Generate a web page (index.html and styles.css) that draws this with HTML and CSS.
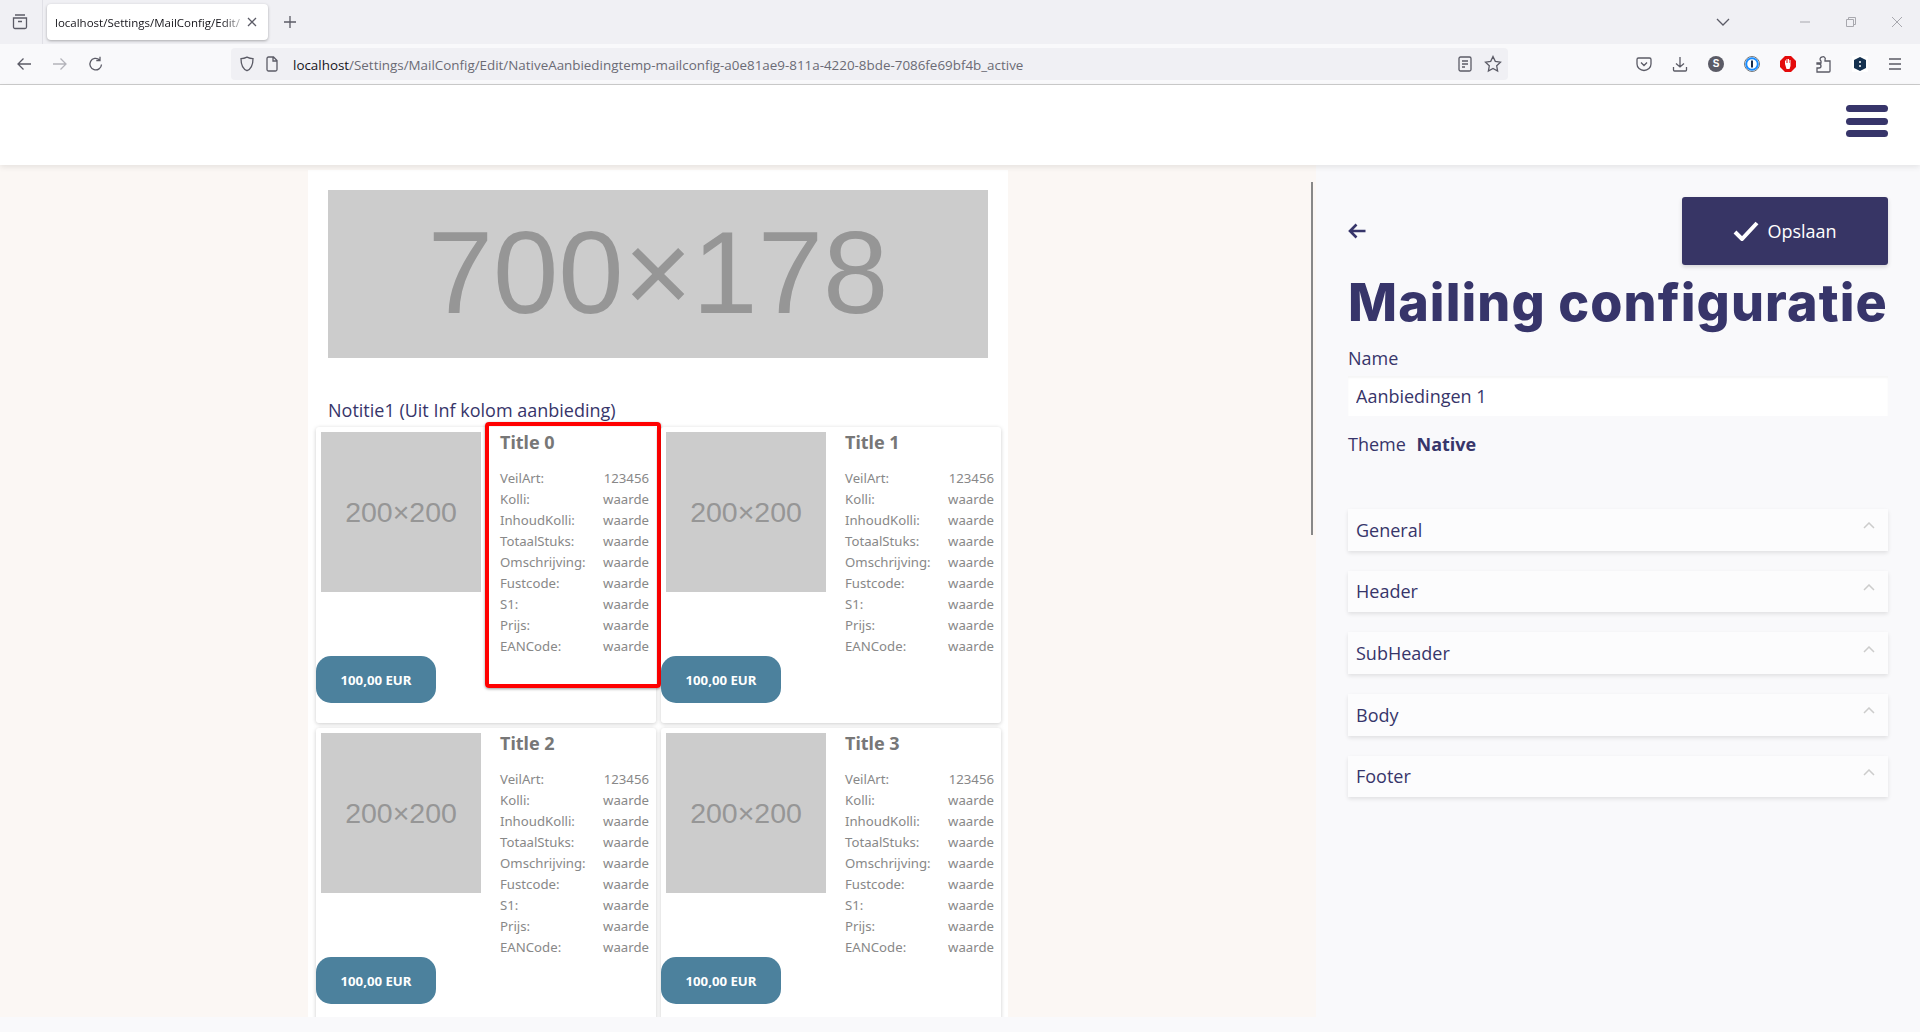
FILE: index.html
```html
<!DOCTYPE html>
<html lang="nl">
<head>
<meta charset="utf-8">
<title>Mailing configuratie</title>
<link rel="stylesheet" href="styles.css">
</head>
<body>
<div class="tabbar">
  <div class="tabbar-left">
    <svg class="ico" width="16" height="16" viewBox="0 0 16 16"><path d="M3 1.500h10M1.500 4.500h13v9a1.500 1.500 0 0 1-1.500 1.500H3a1.500 1.500 0 0 1-1.500-1.500zM6 8h4" transform="translate(0 -.5)"/></svg>
  </div>
  <div class="tab">
    <span class="tab-title">localhost/Settings/MailConfig/Edit/</span>
    <svg class="ico" width="10" height="10" viewBox="0 0 10 10"><path d="M1 1l8 8M9 1l-8 8"/></svg>
  </div>
  <svg class="ico newtab" width="14" height="14" viewBox="0 0 14 14"><path d="M7 1v12M1 7h12"/></svg>
  <div class="tabbar-right">
    <svg class="ico dropdown" width="14" height="10" viewBox="0 0 14 10"><path d="M1 2l6 6 6-6"/></svg>
    <svg class="win" width="10" height="10" viewBox="0 0 10 10"><path d="M0 5h10"/></svg>
    <svg class="win" width="10" height="10" viewBox="0 0 10 10"><path d="M.5 2.500h7v7h-7zM2.500 2.500v-2h7v7h-2"/></svg>
    <svg class="win" width="10" height="10" viewBox="0 0 10 10"><path d="M0 0l10 10M10 0L0 10"/></svg>
  </div>
</div>
<div class="toolbar">
  <div class="nav">
    <svg class="ico" width="16" height="16" viewBox="0 0 16 16"><path d="M15 8H2M7.500 2.500L2 8l5.500 5.500"/></svg>
    <svg class="ico dim" width="16" height="16" viewBox="0 0 16 16"><path d="M1 8h13M8.500 2.500L14 8l-5.500 5.500"/></svg>
    <svg class="ico" width="16" height="16" viewBox="0 0 16 16"><path d="M13.500 8.500a5.800 5.800 0 1 1-2-4.800M12 .8v3.700H8.300"/></svg>
  </div>
  <div class="urlbar">
    <svg class="ico" width="16" height="16" viewBox="0 0 16 16"><path d="M8 1.200c2 1 4 1.500 6 1.500 0 6-2 10.300-6 12-4-1.700-6-6-6-12 2 0 4-.5 6-1.500z"/></svg>
    <svg class="ico" width="14" height="16" viewBox="0 0 14 16"><path d="M2 2.500A1.500 1.500 0 0 1 3.500 1h5L12 4.500v9a1.500 1.500 0 0 1-1.500 1.500h-7A1.500 1.500 0 0 1 2 13.500zM8 1v4h4"/></svg>
    <span class="url"><b>localhost</b>/Settings/MailConfig/Edit/NativeAanbiedingtemp-mailconfig-a0e81ae9-811a-4220-8bde-7086fe69bf4b_active</span>
    <svg class="ico reader" width="14" height="16" viewBox="0 0 14 16"><path d="M2.500 1h9A1.500 1.500 0 0 1 13 2.500v11a1.500 1.500 0 0 1-1.500 1.500h-9A1.500 1.500 0 0 1 1 13.500v-11A1.500 1.500 0 0 1 2.500 1zM4 5h6M4 8h6M4 11h3"/></svg>
    <svg class="ico" width="18" height="18" viewBox="0 0 18 18"><path d="M9 1.500l2.300 4.900 5.200.7-3.800 3.700.9 5.300L9 13.500l-4.600 2.600.9-5.300L1.500 7.100l5.200-.7z"/></svg>
  </div>
  <div class="addons">
    <svg class="ico" width="16" height="16" viewBox="0 0 16 16"><path d="M2.500 2h11A1.500 1.500 0 0 1 15 3.500V8a7 6.500 0 0 1-14 0V3.500A1.500 1.500 0 0 1 2.500 2zM5 6.500l3 3 3-3"/></svg>
    <svg class="ico" width="16" height="16" viewBox="0 0 16 16"><path d="M8 1v10M4 7.500L8 11l4-3.500M1.500 11v3a1 1 0 0 0 1 1h11a1 1 0 0 0 1-1v-3"/></svg>
    <span class="addon-s">S</span>
    <svg width="16" height="16" viewBox="0 0 16 16"><circle cx="8" cy="8" r="7.500" fill="#fff" stroke="#777"/><circle cx="8" cy="8" r="5.800" fill="none" stroke="#1a8cff" stroke-width="2"/><rect x="7" y="4.500" width="2" height="7" fill="#1a2b4a"/></svg>
    <svg width="16" height="16" viewBox="0 0 16 16"><path d="M5 0h6l5 5v6l-5 5H5l-5-5V5z" fill="#e40b0b"/><path d="M5 8V4.500h1V7h.5V3h1v4H8V3h1v4h.5V4h1v6l-1 3H6.500z" fill="#fff"/></svg>
    <svg class="ico" width="16" height="18" viewBox="0 0 16 18"><path d="M1 8h4V6a2.200 2.200 0 0 1 1-4 2.200 2.200 0 0 1 3 3v1h5v10a1 1 0 0 1-1 1H1v-4h2a2 2 0 0 0 0-4H1z"/></svg>
    <svg class="addon-hex" width="16" height="16" viewBox="0 0 16 16"><path d="M8 1l6 3v8l-6 3-6-3V4z" fill="#14304f"/><circle cx="8" cy="6" r="1" fill="#fff"/><circle cx="8" cy="10" r="1" fill="#fff"/></svg>
    <svg class="ico" width="14" height="12" viewBox="0 0 14 12"><path d="M1 1h12M1 6h12M1 11h12"/></svg>
  </div>
</div>
<header class="appbar">
  <button class="burger" aria-label="Menu"><span></span><span></span><span></span></button>
</header>
<main class="workspace">
  <section class="preview">
    <div class="sheet">
      <div class="hero">700×178</div>
      <p class="note">Notitie1 (Uit Inf kolom aanbieding)</p>
      <div class="cards">
        <article class="card">
          <div class="card-top">
            <div class="thumb">200×200</div>
            <div class="info">
              <h3>Title 0</h3>
              <div class="row"><span>VeilArt:</span><span>123456</span></div>
              <div class="row"><span>Kolli:</span><span>waarde</span></div>
              <div class="row"><span>InhoudKolli:</span><span>waarde</span></div>
              <div class="row"><span>TotaalStuks:</span><span>waarde</span></div>
              <div class="row"><span>Omschrijving:</span><span>waarde</span></div>
              <div class="row"><span>Fustcode:</span><span>waarde</span></div>
              <div class="row"><span>S1:</span><span>waarde</span></div>
              <div class="row"><span>Prijs:</span><span>waarde</span></div>
              <div class="row"><span>EANCode:</span><span>waarde</span></div>
            </div>
          </div>
          <div class="price">100,00 EUR</div>
          <div class="highlight"></div>
        </article>
        <article class="card">
          <div class="card-top">
            <div class="thumb">200×200</div>
            <div class="info">
              <h3>Title 1</h3>
              <div class="row"><span>VeilArt:</span><span>123456</span></div>
              <div class="row"><span>Kolli:</span><span>waarde</span></div>
              <div class="row"><span>InhoudKolli:</span><span>waarde</span></div>
              <div class="row"><span>TotaalStuks:</span><span>waarde</span></div>
              <div class="row"><span>Omschrijving:</span><span>waarde</span></div>
              <div class="row"><span>Fustcode:</span><span>waarde</span></div>
              <div class="row"><span>S1:</span><span>waarde</span></div>
              <div class="row"><span>Prijs:</span><span>waarde</span></div>
              <div class="row"><span>EANCode:</span><span>waarde</span></div>
            </div>
          </div>
          <div class="price">100,00 EUR</div>
        </article>
        <article class="card">
          <div class="card-top">
            <div class="thumb">200×200</div>
            <div class="info">
              <h3>Title 2</h3>
              <div class="row"><span>VeilArt:</span><span>123456</span></div>
              <div class="row"><span>Kolli:</span><span>waarde</span></div>
              <div class="row"><span>InhoudKolli:</span><span>waarde</span></div>
              <div class="row"><span>TotaalStuks:</span><span>waarde</span></div>
              <div class="row"><span>Omschrijving:</span><span>waarde</span></div>
              <div class="row"><span>Fustcode:</span><span>waarde</span></div>
              <div class="row"><span>S1:</span><span>waarde</span></div>
              <div class="row"><span>Prijs:</span><span>waarde</span></div>
              <div class="row"><span>EANCode:</span><span>waarde</span></div>
            </div>
          </div>
          <div class="price">100,00 EUR</div>
        </article>
        <article class="card">
          <div class="card-top">
            <div class="thumb">200×200</div>
            <div class="info">
              <h3>Title 3</h3>
              <div class="row"><span>VeilArt:</span><span>123456</span></div>
              <div class="row"><span>Kolli:</span><span>waarde</span></div>
              <div class="row"><span>InhoudKolli:</span><span>waarde</span></div>
              <div class="row"><span>TotaalStuks:</span><span>waarde</span></div>
              <div class="row"><span>Omschrijving:</span><span>waarde</span></div>
              <div class="row"><span>Fustcode:</span><span>waarde</span></div>
              <div class="row"><span>S1:</span><span>waarde</span></div>
              <div class="row"><span>Prijs:</span><span>waarde</span></div>
              <div class="row"><span>EANCode:</span><span>waarde</span></div>
            </div>
          </div>
          <div class="price">100,00 EUR</div>
        </article>
      </div>
    </div>
    <div class="splitter"></div>
  </section>
  <aside class="config">
    <div class="config-top">
      <svg class="back" width="18" height="16" viewBox="0 0 18 16"><path d="M17.500 8H2M8.500 1.500L2 8l6.500 6.500"/></svg>
      <button class="save">
        <svg width="26" height="20" viewBox="0 0 26 20"><path d="M2 11l7 7L24 2"/></svg>
        <span>Opslaan</span>
      </button>
    </div>
    <h1>Mailing configuratie</h1>
    <label class="field-label" for="name">Name</label>
    <input class="field" id="name" value="Aanbiedingen 1">
    <p class="theme">Theme <strong>Native</strong></p>
    <div class="accordions">
      <div class="acc"><span>General</span><svg width="12" height="7" viewBox="0 0 12 7"><path d="M1 6l5-5 5 5"/></svg></div>
      <div class="acc"><span>Header</span><svg width="12" height="7" viewBox="0 0 12 7"><path d="M1 6l5-5 5 5"/></svg></div>
      <div class="acc"><span>SubHeader</span><svg width="12" height="7" viewBox="0 0 12 7"><path d="M1 6l5-5 5 5"/></svg></div>
      <div class="acc"><span>Body</span><svg width="12" height="7" viewBox="0 0 12 7"><path d="M1 6l5-5 5 5"/></svg></div>
      <div class="acc"><span>Footer</span><svg width="12" height="7" viewBox="0 0 12 7"><path d="M1 6l5-5 5 5"/></svg></div>
    </div>
  </aside>
</main>
</body>
</html>
```
FILE: styles.css
```css
* { box-sizing: border-box; }
html, body { margin: 0; height: 100%; overflow: hidden; }
body { font-family: "Open Sans", "Noto Sans", sans-serif; color: #37356a; background: #f9f9fb; }
.ico { fill: none; stroke: #5b5b66; stroke-width: 1.3; flex: none; display: block; }
.ico.dim { stroke: #b4b4ba; }

.tabbar { height: 44px; background: #f0f0f4; display: flex; align-items: center; }
.tabbar-left { width: 43px; height: 44px; border-right: 1px solid #e0e0e6; padding: 14px 0 0 12px; }
.tab { margin: 0 0 0 4px; width: 221px; height: 36px; background: #fff; border-radius: 4px; box-shadow: 0 1px 3px rgba(0,0,0,.3); display: flex; align-items: center; padding: 0 11px 0 8px; gap: 6px; }
.tab-title { flex: 1; min-width: 0; font-size: 11.500px; color: #15141a; white-space: nowrap; -webkit-mask-image: linear-gradient(90deg, #000 90%, rgba(0,0,0,.25)); mask-image: linear-gradient(90deg, #000 90%, rgba(0,0,0,.25)); }
.newtab { margin-left: 15px; }
.tabbar-right { margin-left: auto; display: flex; align-items: center; }
.dropdown { margin-right: 70px; }
.win { fill: none; stroke: #a8a8ae; stroke-width: 1; margin-right: 36px; }
.win:last-child { margin-right: 18px; }

.toolbar { height: 41px; background: #f9f9fb; border-bottom: 1px solid #ccc; display: flex; align-items: center; }
.nav { width: 231px; padding-left: 16px; display: flex; gap: 20px; }
.urlbar { width: 1277px; height: 32px; background: #f0f0f4; border-radius: 4px; display: flex; align-items: center; padding: 0 6px 0 8px; }
.urlbar .ico:nth-child(2) { margin-left: 10px; }
.url { margin-left: 14px; padding-top: 2px; font-size: 13.400px; color: #6b6b75; white-space: nowrap; flex: 1; }
.url b { font-weight: 400; color: #15141a; }
.reader { margin-right: 12px; }
.addons { display: flex; align-items: center; gap: 20px; margin-left: 128px; }
.addon-s { width: 16px; height: 16px; border-radius: 50%; background: #5b5b66; color: #fff; font: 700 10px/16px "Liberation Sans", sans-serif; text-align: center; }
.addon-hex { background: #fff; }

.appbar { height: 80px; background: #fff; box-shadow: 0 2px 6px rgba(0,0,0,.09); display: flex; justify-content: flex-end; align-items: flex-start; padding: 20px 32px 0 0; position: relative; }
.burger { width: 42px; height: 32px; padding: 0; border: 0; background: none; display: flex; flex-direction: column; justify-content: space-between; }
.burger span { display: block; height: 7px; border-radius: 4px; background: #37356a; }

.workspace { height: 867px; display: flex; }
.preview { width: 1316px; height: 852px; background: #fbf7f4; padding: 5px 3px 0 308px; display: flex; }
.sheet { width: 700px; height: 847px; overflow: hidden; background: #fff; padding-top: 20px; }
.hero { margin: 0 20px; height: 168px; background: #ccc; color: #969696; font: 117.500px/166px "Liberation Sans", sans-serif; text-align: center; }
.note { margin: 40px 0 4px; padding-left: 20px; font-size: 18px; line-height: 25px; }
.cards { margin-left: 8px; width: 685px; display: grid; grid-template-columns: 340px 340px; gap: 5px; }
.card { position: relative; height: 296px; background: #fff; box-shadow: 0 1px 4px rgba(0,0,0,.2); border-radius: 3px; padding-top: 5px; }
.card-top { display: flex; height: 224px; padding-left: 5px; }
.thumb { width: 160px; height: 160px; background: #ccc; color: #969696; font: 28.500px/160px "Liberation Sans", sans-serif; text-align: center; flex: none; }
.info { margin-left: 19px; width: 149px; font-family: "Noto Sans", sans-serif; font-size: 13.200px; color: #888; }
.info h3 { margin: 0 0 16px; font: 700 18px/20px "Noto Sans", sans-serif; color: #777; }
.row { display: flex; justify-content: space-between; line-height: 21px; }
.price { width: 120px; height: 47px; border-radius: 15px; background: #4c819d; color: #fff; font: 700 13.200px/48px "Noto Sans", sans-serif; text-align: center; }
.highlight { position: absolute; left: 169px; top: -5px; width: 176px; height: 266px; border: 4px solid #f00; border-radius: 4px; box-shadow: 0 1px 3px rgba(0,0,0,.4); }
.splitter { width: 2px; height: 353px; margin: 12px 0 0 auto; background: #888; }

.config { width: 604px; background: #f9f9fb; padding: 32px 32px 0 32px; }
.config-top { display: flex; justify-content: space-between; align-items: center; }
.back { fill: none; stroke: #37356a; stroke-width: 2.600; }
.save { width: 206px; height: 68px; border: 0; border-radius: 3px; background: #373565; color: #fff; font: 18px "Open Sans", sans-serif; display: flex; align-items: center; justify-content: center; gap: 8px; box-shadow: 0 2px 4px rgba(0,0,0,.15); }
.save svg { fill: none; stroke: #fff; stroke-width: 4; }
h1 { margin: 8px 0 13px; font: 800 52px/60px Inter, sans-serif; letter-spacing: 1.100px; color: #37356a; white-space: nowrap; }
.field-label { display: block; font-size: 18px; line-height: 24px; margin-bottom: 6px; }
.field { display: block; width: 100%; height: 40px; border: 0; outline: 0; background: #fff; box-shadow: inset 0 2px 2px rgba(0,0,0,.04); padding: 0 8px; font: 18px "Open Sans", sans-serif; color: #37356a; }
.theme { margin: 16px 0 53px; font-size: 18px; line-height: 24px; }
.theme strong { margin-left: 6px; font-weight: 700; }
.accordions { display: flex; flex-direction: column; gap: 20px; }
.acc { height: 41.670px; background: #fcfcfd; box-shadow: 0 2px 4px rgba(0,0,0,.1); display: flex; justify-content: space-between; align-items: center; padding: 0 13px 0 8px; font-size: 18px; }
.acc svg { fill: none; stroke: #ccc; stroke-width: 1.500; margin-bottom: 8px; }
```
